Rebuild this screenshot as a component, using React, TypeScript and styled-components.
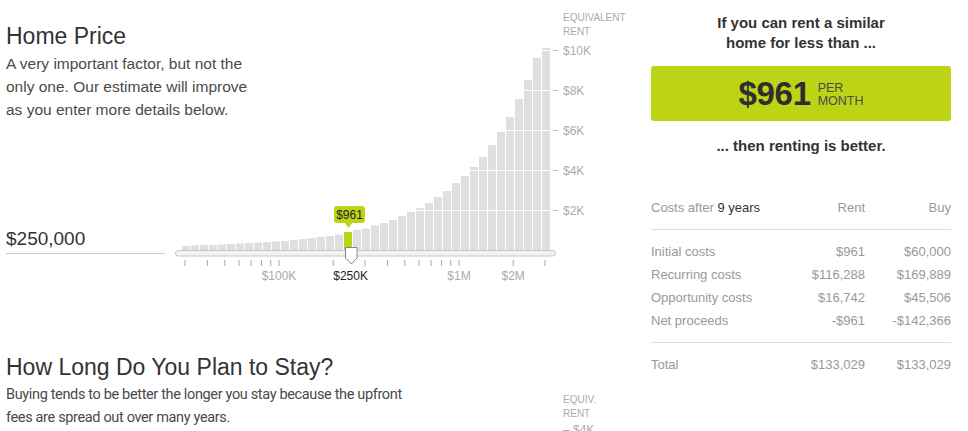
import React from "react";
import styled, { createGlobalStyle } from "styled-components";

const GREEN = "#bcd415";

const GlobalStyle = createGlobalStyle`
  body {
    margin: 0;
    background: #fff;
    font-family: "Liberation Sans", Arial, sans-serif;
    color: #333;
  }
`;

const Page = styled.div`
  display: flex;
  width: 968px;
  height: 431px;
  overflow: hidden;
`;

const LeftCol = styled.div`
  flex: none;
  width: 645px;
  padding-left: 6px;
`;

const PriceSection = styled.section`
  display: grid;
  grid-template-columns: 169px 76px 1fr;
  grid-template-rows: auto 1fr;
  height: 290px;
`;

const Intro = styled.div`
  grid-column: 1 / 3;
  grid-row: 1;
`;

const Title = styled.h2<{ $top?: number }>`
  margin: ${(p) => p.$top ?? 0}px 0 2px;
  font-size: 23px;
  line-height: 28px;
  font-weight: normal;
  color: #333;
`;

const Desc = styled.p<{ $narrow?: boolean }>`
  margin: 0;
  font-family: ${(p) =>
    p.$narrow ? `Roboto, "Liberation Sans", sans-serif` : `"Liberation Sans", Arial, sans-serif`};
  font-size: ${(p) => (p.$narrow ? 14.5 : 15.5)}px;
  letter-spacing: ${(p) => (p.$narrow ? "-0.35px" : "normal")};
  line-height: 23px;
  color: #4a4a4a;
`;

const PriceField = styled.div`
  grid-column: 1;
  grid-row: 2;
  align-self: end;
  width: 159px;
  margin-bottom: 36px;
  padding-bottom: 3px;
  border-bottom: 1px solid #ccc;
  font-size: 19px;
  line-height: 22px;
  color: #333;
`;

const ChartBox = styled.div`
  grid-column: 2 / 4;
  grid-row: 1 / 3;
  font-family: "Liberation Sans", Arial, sans-serif;
`;

const StaySection = styled.section`
  display: grid;
  grid-template-columns: 557px 1fr;
  padding-top: 63px;
`;

const StayIntro = styled.div`
  max-width: 400px;
`;

const AxisNote = styled.div`
  padding-top: 40px;
  font-size: 10px;
  line-height: 14px;
  text-transform: uppercase;
  color: #aaa;
`;

const AxisTick = styled.div`
  margin-top: 2px;
  font-size: 12px;
  line-height: 14px;
  color: #aaa;
  text-transform: none;
`;

const Sidebar = styled.aside`
  flex: none;
  width: 300px;
  padding-top: 13px;
`;

const Lead = styled.p<{ $gap?: number }>`
  margin: ${(p) => p.$gap ?? 0}px 0 0;
  text-align: center;
  font-size: 15px;
  line-height: 20px;
  font-weight: bold;
  color: #333;
`;

const PriceBox = styled.div`
  margin-top: 13px;
  height: 55px;
  background: ${GREEN};
  border-radius: 3px;
  display: flex;
  align-items: center;
  justify-content: center;
  gap: 7px;
`;

const Amount = styled.span`
  font-size: 33px;
  font-weight: bold;
  color: #2e2e2e;
  letter-spacing: -0.3px;
`;

const Unit = styled.span`
  font-size: 12.5px;
  line-height: 13px;
  color: #4a4a4a;
  text-transform: uppercase;
  margin-top: 2px;
`;

const Table = styled.div`
  margin-top: 40px;
  font-size: 13px;
  color: #999;
`;

const Row = styled.div`
  display: grid;
  grid-template-columns: 1fr 90px 86px;
  line-height: 23px;

  & > span:not(:first-child) {
    text-align: right;
  }
`;

const HeadRow = styled(Row)`
  padding-bottom: 10px;
  border-bottom: 1px solid #ddd;
`;

const Group = styled.div<{ $line?: boolean }>`
  padding: 10px 0;
  border-bottom: ${(p) => (p.$line ? "1px solid #ddd" : "none")};
`;

const Strong = styled.span`
  color: #333;
`;

const BAR_HEIGHTS = [
  4, 4.5, 5, 5, 5.5, 6, 6.5, 7, 7.5, 8, 8.5, 9, 10, 11, 12, 13, 14, 15.5, 18,
  20, 21.5, 24.5, 27, 30, 34, 38, 42, 47, 53, 59, 67, 74, 83, 93, 105, 118, 133,
  151, 170, 192, 202,
];
const ACTIVE = 18;
const BASE = 250;
const GRID = [
  { y: 50, label: "$10K" },
  { y: 90, label: "$8K" },
  { y: 130, label: "$6K" },
  { y: 170, label: "$4K" },
  { y: 210, label: "$2K" },
];
const TICKS = [
  3e4, 4e4, 5e4, 6e4, 7e4, 8e4, 9e4, 1e5, 2e5, 3e5, 4e5, 5e5, 6e5, 7e5, 8e5,
  9e5, 1e6, 2e6, 3e6,
];
const logX = (v: number) => 104 + 180 * Math.log10(v / 1e5);
const TICK_LABELS = [
  { v: 1e5, label: "$100K" },
  { v: 2.5e5, label: "$250K", active: true },
  { v: 1e6, label: "$1M" },
  { v: 2e6, label: "$2M" },
];

// white gridline starts at the first bar tall enough to reach it
const gridStart = (y: number) => {
  const i = BAR_HEIGHTS.findIndex((h) => BASE - h < y);
  return 7 + 9 * (i < 0 ? BAR_HEIGHTS.length : i);
};

function RentChart() {
  return (
    <svg width="476" height="290" viewBox="0 0 476 290">
      <text x="388" y="21" fontSize="10" fill="#aaa">EQUIVALENT</text>
      <text x="388" y="35" fontSize="10" fill="#aaa">RENT</text>
      {BAR_HEIGHTS.map((h, i) => (
        <rect
          key={i}
          x={7 + 9 * i}
          y={BASE - h}
          width="8"
          height={h}
          fill={i === ACTIVE ? GREEN : "#dfdfdf"}
        />
      ))}
      {GRID.map((g) => (
        <g key={g.label}>
          <line
            x1={gridStart(g.y)}
            x2="375"
            y1={g.y + 0.5}
            y2={g.y + 0.5}
            stroke="#fff"
          />
          <line x1="378" x2="383" y1={g.y + 0.5} y2={g.y + 0.5} stroke="#bbb" />
          <text x="388" y={g.y + 4.5} fontSize="12" fill="#aaa">
            {g.label}
          </text>
        </g>
      ))}
      <rect
        x="0.5"
        y="250.5"
        width="380"
        height="5.5"
        rx="2.75"
        fill="#f2f2f2"
        stroke="#c6c6c6"
      />
      {TICKS.map((v) => (
        <line
          key={v}
          x1={logX(v)}
          x2={logX(v)}
          y1="260"
          y2="266"
          stroke="#aaa"
        />
      ))}
      {TICK_LABELS.map((t) => (
        <text
          key={t.label}
          x={logX(t.v)}
          y="280"
          fontSize="12"
          textAnchor="middle"
          fill={t.active ? "#222" : "#aaa"}
        >
          {t.label}
        </text>
      ))}
      <polygon
        points="170.5,247.5 182,247.5 182,258 176.25,264 170.5,258"
        fill="#fff"
        stroke="#888"
      />
      <rect x="159" y="206" width="31" height="17" rx="3" fill={GREEN} />
      <polygon points="169.5,222.5 177.5,222.5 173.5,228" fill={GREEN} />
      <text x="174.5" y="219" fontSize="12" textAnchor="middle" fill="#222">
        $961
      </text>
    </svg>
  );
}

const rows = [
  ["Initial costs", "$961", "$60,000"],
  ["Recurring costs", "$116,288", "$169,889"],
  ["Opportunity costs", "$16,742", "$45,506"],
  ["Net proceeds", "-$961", "-$142,366"],
];

export default function App() {
  return (
    <>
      <GlobalStyle />
      <Page>
        <LeftCol>
          <PriceSection>
            <Intro>
              <Title $top={22}>Home Price</Title>
              <Desc>
                A very important factor, but not the only one. Our estimate will
                improve as you enter more details below.
              </Desc>
            </Intro>
            <PriceField>$250,000</PriceField>
            <ChartBox>
              <RentChart />
            </ChartBox>
          </PriceSection>
          <StaySection>
            <StayIntro>
              <Title>How Long Do You Plan to Stay?</Title>
              <Desc $narrow>
                Buying tends to be better the longer you stay because the upfront
                fees are spread out over many years.
              </Desc>
            </StayIntro>
            <AxisNote>
              Equiv.
              <br />
              Rent
              <AxisTick>– $4K</AxisTick>
            </AxisNote>
          </StaySection>
        </LeftCol>
        <Sidebar>
          <Lead>
            If you can rent a similar
            <br />
            home for less than ...
          </Lead>
          <PriceBox>
            <Amount>$961</Amount>
            <Unit>
              Per
              <br />
              Month
            </Unit>
          </PriceBox>
          <Lead $gap={15}>... then renting is better.</Lead>
          <Table>
            <HeadRow>
              <span>
                Costs after <Strong>9 years</Strong>
              </span>
              <span>Rent</span>
              <span>Buy</span>
            </HeadRow>
            <Group $line>
              {rows.map((r) => (
                <Row key={r[0]}>
                  <span>{r[0]}</span>
                  <span>{r[1]}</span>
                  <span>{r[2]}</span>
                </Row>
              ))}
            </Group>
            <Group>
              <Row>
                <span>Total</span>
                <span>$133,029</span>
                <span>$133,029</span>
              </Row>
            </Group>
          </Table>
        </Sidebar>
      </Page>
    </>
  );
}
